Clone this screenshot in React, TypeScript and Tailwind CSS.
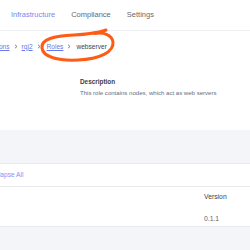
import React from "react";

function Chevron() {
  return (
    <svg width="4" height="5" viewBox="0 0 4 5" className="shrink-0">
      <path d="M1 0.8 L3 2.5 L1 4.2" fill="none" stroke="#777" strokeWidth="0.9" />
    </svg>
  );
}

export default function App(): React.ReactElement {
  return (
    <main
      className="w-[250px] h-[250px] overflow-hidden bg-white flex flex-col"
      style={{ fontFamily: '"Liberation Sans", Arial, sans-serif' }}
    >
      {/* Top nav */}
      <header className="h-[31px] shrink-0 border-b border-[#eef0f3] flex items-center gap-[16px] pl-[11px] text-[7.5px]">
        <span className="text-[#7c86ee]">Infrastructure</span>
        <span className="text-[#666a70]">Compliance</span>
        <span className="text-[#666a70]">Settings</span>
      </header>

      {/* Breadcrumb */}
      <div className="relative h-[30px] shrink-0 flex items-center">
        <nav className="flex items-center gap-[4px] ml-[-26px] text-[6.6px] pt-[1px]">
          <span className="text-[#6d78e8] underline">Applications</span>
          <Chevron />
          <span className="text-[#6d78e8] underline">rqj2</span>
          <Chevron />
          <span className="ml-[2px] text-[#6d78e8] underline">Roles</span>
          <Chevron />
          <span className="ml-[1px] text-[#444]">webserver</span>
        </nav>
        {/* hand-drawn annotation */}
        <svg className="absolute left-0 top-[-31px] pointer-events-none" width="250" height="100" viewBox="0 0 250 100">
          <path
            d="M95 33.5 C104 32, 112 35, 113 42 C114 52, 100 59, 78 60 C58 61, 43 57, 42 48 C41 39, 54 36, 74 35 C88 34, 99 33, 106 30"
            fill="none"
            stroke="#ff5b14"
            strokeWidth="3"
            strokeLinecap="round"
          />
        </svg>
      </div>

      {/* Description */}
      <section className="h-[69px] shrink-0 pl-[80px] pt-[17px] flex flex-col gap-[3px]">
        <span className="text-[6.4px] font-bold text-[#3d3d4a] leading-[8px]">Description</span>
        <span className="text-[6.05px] text-[#6b6b7a] leading-[8px]">
          This role contains nodes, which act as web servers
        </span>
      </section>

      {/* Gray area with card */}
      <section className="flex-1 bg-[#f3f5f8] pt-[33px]">
        <div className="bg-white border-y border-[#e8eaee]">
          <div className="h-[23px] flex items-center border-b border-[#e8eaee]">
            <span className="ml-[-11px] text-[6.6px] text-[#8a90f0]">Collapse All</span>
          </div>
          <div className="h-[39px] flex flex-col pl-[204px] pt-[6px] gap-[14px] text-[6.8px] leading-[8px]">
            <span className="text-[#444]">Version</span>
            <span className="text-[#666]">0.1.1</span>
          </div>
        </div>
      </section>
    </main>
  );
}
